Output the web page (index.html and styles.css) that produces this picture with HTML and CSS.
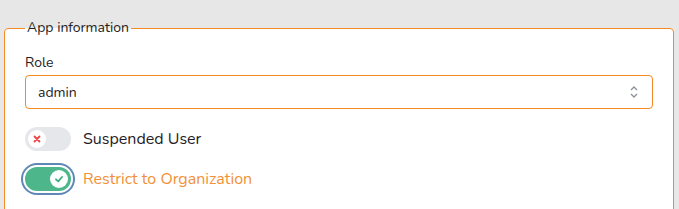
FILE: index.html
```html
<!DOCTYPE html>
<html>
<head>
<meta charset="utf-8">
<link rel="stylesheet" href="styles.css">
</head>
<body>
<fieldset class="panel">
  <legend class="panel-title">App information</legend>
  <div class="field">
    <label class="field-label">Role</label>
    <div class="select">
      <span class="select-value">admin</span>
      <svg class="select-arrows" width="10" height="14" viewBox="0 0 10 14"><path d="M2 5 L5 2 L8 5 M2 9 L5 12 L8 9" fill="none" stroke="#8a8f99" stroke-width="1.3"/></svg>
    </div>
  </div>
  <div class="toggle-row">
    <span class="toggle toggle-off">
      <span class="knob"><svg width="10" height="10" viewBox="0 0 10 10"><path d="M2.5 2.5 L7.5 7.5 M7.5 2.5 L2.5 7.5" stroke="#ef4444" stroke-width="1.8" stroke-linecap="round"/></svg></span>
    </span>
    <span class="toggle-label">Suspended User</span>
  </div>
  <div class="toggle-row">
    <span class="toggle-ring">
      <span class="toggle toggle-on">
        <span class="knob"><svg width="10" height="10" viewBox="0 0 10 10"><path d="M2 5.3 L4.2 7.4 L8 3" fill="none" stroke="#3fae7f" stroke-width="1.8" stroke-linecap="round" stroke-linejoin="round"/></svg></span>
      </span>
    </span>
    <span class="toggle-label active">Restrict to Organization</span>
  </div>
</fieldset>
</body>
</html>
```
FILE: styles.css
```css
html, body {
  margin: 0;
  background: #e7e7e7;
}
body {
  padding: 19px 5px 0 4px;
  font-family: "Nunito", "Lato", "Noto Sans", sans-serif;
  color: #1f2124;
}
.panel {
  margin: 0;
  border: 1px solid #f28a26;
  border-radius: 4px;
  background: #fff;
  padding: 16px 20px 30px 20px;
}
.panel-title {
  font-size: 14px;
  padding: 0 2px;
  line-height: 18px;
  color: #222;
}
.field {
  display: flex;
  flex-direction: column;
  gap: 2px;
}
.field-label {
  font-size: 14px;
  line-height: 20px;
}
.select {
  height: 34px;
  box-sizing: border-box;
  border: 1px solid #f28a26;
  border-radius: 4px;
  display: flex;
  align-items: center;
  justify-content: space-between;
  padding: 0 13px 0 12px;
}
.select-value {
  font-size: 14px;
}
.toggle-row {
  display: flex;
  align-items: center;
  gap: 12px;
  margin-top: 18px;
}
.toggle-row + .toggle-row {
  margin-top: 16px;
}
.toggle {
  width: 46px;
  height: 24px;
  border-radius: 12px;
  box-sizing: border-box;
  display: flex;
  align-items: center;
  padding: 0 3px;
  flex: none;
}
.toggle-off {
  background: #e5e7eb;
}
.toggle-on {
  background: #4db68a;
  justify-content: flex-end;
}
.toggle-ring {
  border: 2px solid #5f88b6;
  border-radius: 16px;
  padding: 2px;
  margin: -4px;
  display: flex;
  background: #fff;
}
.knob {
  width: 18px;
  height: 18px;
  border-radius: 50%;
  background: #fff;
  display: flex;
  align-items: center;
  justify-content: center;
}
.toggle-label {
  font-size: 16px;
  line-height: 20px;
}
.toggle-label.active {
  color: #f29138;
}
```
